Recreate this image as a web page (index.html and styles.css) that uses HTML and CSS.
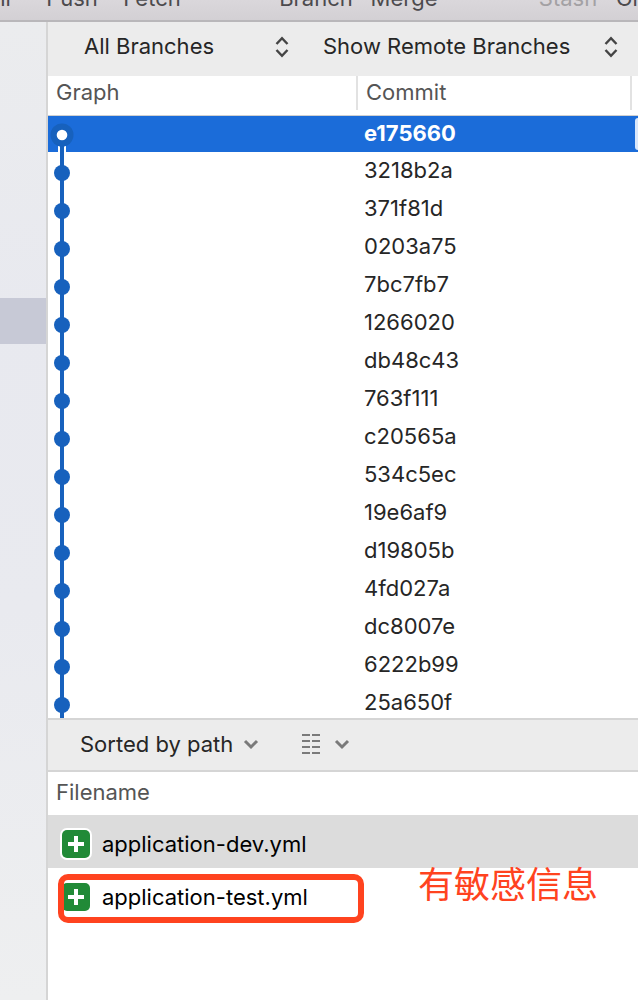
FILE: index.html
```
<!DOCTYPE html>
<html lang="en">
<head>
  <meta charset="UTF-8">
  <meta name="viewport" content="width=device-width, initial-scale=1.0">
  <title>Commit history</title>
  <link rel="stylesheet" href="styles.css">
</head>
<body>
  <header class="toolbar">
    <button type="button">Pull</button>
    <button type="button">Push</button>
    <button type="button">Fetch</button>
    <button type="button" class="group">Branch</button>
    <button type="button" class="next">Merge</button>
    <button type="button" class="group" disabled>Stash</button>
    <button type="button" class="next">Git Flow</button>
  </header>

  <div class="window">
    <nav class="sidebar">
      <div class="selected"></div>
    </nav>

    <main>
      <div class="filters">
        <div class="select branches">
          <select aria-label="Branches">
            <option>All Branches</option>
            <option>Current Branch</option>
          </select>
          <svg width="14" height="22" viewBox="0 0 14 22"><path d="M1.5 8 L7 2.2 L12.5 8 M1.5 14 L7 19.8 L12.5 14"/></svg>
        </div>
        <div class="select remotes">
          <select aria-label="Remote branches">
            <option>Show Remote Branches</option>
            <option>Hide Remote Branches</option>
          </select>
          <svg width="14" height="22" viewBox="0 0 14 22"><path d="M1.5 8 L7 2.2 L12.5 8 M1.5 14 L7 19.8 L12.5 14"/></svg>
        </div>
      </div>

      <section class="log">
        <table class="commits">
          <colgroup>
            <col class="col-graph">
            <col class="col-commit">
            <col>
          </colgroup>
          <thead>
            <tr><th><span>Graph</span></th><th><span>Commit</span></th><td></td></tr>
          </thead>
          <tbody id="commits">
            <tr class="current">
              <td><svg width="28" height="36"><path class="edge" d="M14 30 V36"/><path class="line" d="M14 19 V36"/><circle class="node" cx="14" cy="19" r="11.5"/><circle cx="14" cy="19" r="5.3" fill="#fff"/></svg></td>
              <td>e175660</td>
              <td><div class="tag"></div></td>
            </tr>
          </tbody>
        </table>
      </section>

      <section class="files">
        <div class="sortbar">
          <button type="button">Sorted by path
            <svg width="16" height="12" viewBox="0 0 16 12"><path d="M2 3 L8 9 L14 3"/></svg>
          </button>
          <button type="button" aria-label="View options">
            <svg class="list" width="20" height="22" viewBox="0 0 20 22"><path d="M1 2 H9 M11 2 H19 M1 8 H9 M11 8 H19 M1 14 H9 M11 14 H19 M1 20 H9 M11 20 H19"/></svg>
            <svg width="16" height="12" viewBox="0 0 16 12"><path d="M2 3 L8 9 L14 3"/></svg>
          </button>
        </div>
        <table class="filelist">
          <thead>
            <tr><th>Filename</th></tr>
          </thead>
          <tbody>
            <tr class="active">
              <td><div class="file"><svg width="32" height="32" viewBox="0 0 32 32"><rect width="32" height="32" rx="7" fill="#fff"/><rect x="2" y="2" width="28" height="28" rx="5" fill="#218a37"/><path d="M16 8 V24 M8 16 H24"/></svg>application-dev.yml</div></td>
            </tr>
            <tr>
              <td><div class="file"><svg width="32" height="32" viewBox="0 0 32 32"><rect x="2" y="2" width="28" height="28" rx="5" fill="#218a37"/><path d="M16 8 V24 M8 16 H24"/></svg>application-test.yml
                <div class="mark"></div>
                <div class="note" lang="zh">有敏感信息</div>
              </div></td>
            </tr>
          </tbody>
        </table>
      </section>
    </main>
  </div>

  <script>
    const commits = ["3218b2a", "371f81d", "0203a75", "7bc7fb7", "1266020", "db48c43", "763f111", "c20565a",
      "534c5ec", "19e6af9", "d19805b", "4fd027a", "dc8007e", "6222b99", "25a650f"];

    const body = document.querySelector("#commits");
    commits.forEach(function(hash){
      const row = document.createElement("tr");
      row.innerHTML = `<td><svg width="28" height="38"><path class="line" d="M14 0 V38"/><circle class="node" cx="14" cy="21" r="8"/></svg></td><td>${hash}</td><td></td>`;
      body.append(row);
    });
  </script>
</body>
</html>
```

FILE: styles.css
```
* {
  box-sizing: border-box;
}
body {
  display: flex;
  flex-direction: column;
  height: 100vh;
  margin: 0;
  overflow: hidden;
  font-family: Inter, "Noto Sans CJK SC", sans-serif;
  font-size: 22px;
  line-height: 28px;
  color: #262626;
  background: #fff;
}
button, select {
  padding: 0;
  border: none;
  background: none;
  font: inherit;
  color: inherit;
}
svg {
  display: block;
  flex: none;
}

.toolbar {
  display: flex;
  align-items: flex-end;
  flex: none;
  height: 22px;
  padding-bottom: 8px;
  overflow: hidden;
  background: linear-gradient(#dad7db, #d3d0d4);
  border-bottom: 2px solid #b9b7ba;
}
.toolbar button {
  flex: none;
  width: 80px;
  white-space: nowrap;
  color: #4c4a4d;
}
.toolbar button:first-child {
  margin-left: -48px;
}
.toolbar .group {
  margin-left: 84px;
}
.toolbar .next {
  margin-left: 8px;
}
.toolbar button:disabled {
  color: #a3a1a4;
}

.window {
  display: flex;
  flex: 1;
  min-height: 0;
}
.sidebar {
  flex: none;
  width: 48px;
  padding-top: 276px;
  background: linear-gradient(#ebecee, #e8e9ef 30%, #e9eaef 60%, #eeeff0);
  border-right: 2px solid #d5d5d5;
}
.selected {
  height: 46px;
  background: #c7c9d6;
}
main {
  display: flex;
  flex-direction: column;
  flex: 1;
  min-width: 0;
}

.filters {
  display: flex;
  flex: none;
  gap: 34px;
  height: 54px;
  padding: 0 20px 4px 36px;
  align-items: center;
  background: #ececec;
}
.select {
  position: relative;
}
.select select {
  display: block;
  width: 100%;
  height: 32px;
  padding-bottom: 2px;
  appearance: none;
}
.branches {
  flex: 205 1 0;
}
.remotes {
  flex: 295 1 0;
}
.select svg {
  position: absolute;
  right: 0;
  top: 5px;
  pointer-events: none;
  fill: none;
  stroke: #444;
  stroke-width: 2.4;
}

table {
  width: 100%;
  border-collapse: collapse;
  table-layout: fixed;
}
th, td {
  padding: 0;
  text-align: left;
  font-weight: 400;
}
th {
  color: #555;
}
.log {
  flex: 1;
  min-height: 0;
  overflow: hidden;
}
.col-graph {
  width: 310px;
}
.col-commit {
  width: 274px;
}
.commits thead tr {
  height: 40px;
  box-shadow: inset 0 -1px #d0d0d0;
}
.commits th {
  vertical-align: top;
}
.commits th span {
  display: block;
  height: 34px;
  padding: 2px 8px;
  border-right: 2px solid #e2e2e2;
}
.commits tbody tr {
  height: 38px;
}
.commits tbody td:nth-child(2) {
  padding: 0 0 2px 6px;
}
.commits tbody .current {
  height: 36px;
  color: #fff;
  background: #1b6cd9;
}
.current td:nth-child(2) {
  font-weight: 700;
}
.tag {
  height: 32px;
  margin-left: 3px;
  background: #d9e7fb;
  border-radius: 6px 0 0 6px;
}
.node {
  fill: #1761bd;
}
.line {
  stroke: #1761bd;
  stroke-width: 4;
}
.edge {
  stroke: #fff;
  stroke-width: 8;
}

.files {
  flex: none;
  height: 282px;
}
.sortbar {
  display: flex;
  gap: 42px;
  align-items: center;
  height: 54px;
  padding: 0 0 2px 32px;
  background: #ececec;
  border-top: 2px solid #d5d5d5;
  border-bottom: 2px solid #d5d5d5;
}
.sortbar button {
  display: flex;
  align-items: center;
  gap: 10px;
}
.sortbar button + button {
  gap: 13px;
}
.sortbar svg {
  fill: none;
  stroke: #7a7a7a;
  stroke-width: 3;
}
.sortbar .list {
  stroke-width: 2;
}
.filelist th {
  height: 43px;
  padding: 0 0 4px 8px;
}
.filelist tr.active {
  background: #dcdcdc;
}
.file {
  position: relative;
  display: flex;
  align-items: center;
  gap: 10px;
  height: 54px;
  padding: 4px 0 0 12px;
  color: #000;
}
.active .file {
  height: 53px;
}
.mark {
  position: absolute;
  left: 10px;
  top: 6px;
  width: 306px;
  height: 49px;
  border: 6px solid #ff431f;
  border-radius: 10px;
}
.file path {
  stroke: #fff;
  stroke-width: 4;
}
.note {
  position: absolute;
  left: 370px;
  top: -8px;
  font-family: "Noto Sans CJK SC", sans-serif;
  font-size: 36px;
  line-height: 44px;
  white-space: nowrap;
  color: #ff431f;
}
```
